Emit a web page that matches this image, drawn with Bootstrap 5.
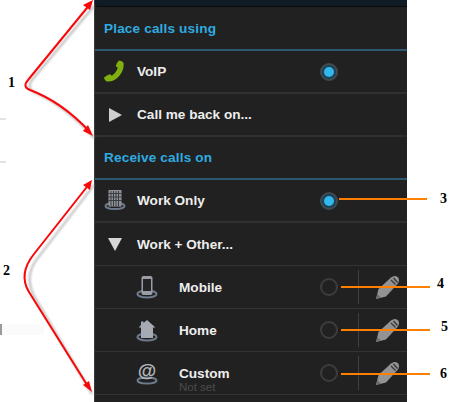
<!DOCTYPE html>
<html lang="en">
  <head>
    <meta charset="UTF-8" />
    <title>Call settings</title>
    <link href="https://cdn.jsdelivr.net/npm/bootstrap@5.3.2/dist/css/bootstrap.min.css" rel="stylesheet" />
    <style>
      body {
        background-color: #ffffff;
        width: 453px;
        height: 402px;
        overflow: hidden;
        position: relative;
        font-family: "Liberation Sans", Arial, sans-serif;
      }

      .phone-panel {
        margin-left: 94px;
        width: 313px;
        height: 402px;
        background-color: #212121;
        border-left: 1px solid #3c3c3c;
        overflow: hidden;
      }

      .title-bar {
        height: 6px;
        background-color: #111b23;
        border-bottom: 1px solid #0c0c0c;
        box-sizing: content-box;
      }

      .section-head {
        height: 43px;
        padding-left: 9px;
        padding-top: 2px;
        color: #2fabe0;
        font-size: 13.6px;
        font-weight: 700;
        letter-spacing: 0.15px;
        border-bottom: 2px solid #2b5a6e;
      }

      .section-head.first-head {
        height: 44px;
      }

      .opt-row {
        height: 43px;
        border-bottom: 1px solid #343434;
        color: #eeeeee;
        font-size: 13.6px;
        font-weight: 700;
      }

      .opt-row.thick-line {
        border-bottom: 2px solid #303030;
      }

      .opt-icon {
        width: 42px;
        flex: none;
        padding-right: 2px;
      }

      .sub-row .opt-icon {
        margin-left: 30px;
        width: 54px;
        padding-right: 10px;
      }

      .opt-label {
        flex: 1 1 auto;
        min-width: 0;
        padding-top: 2px;
      }

      .opt-note {
        display: block;
        color: #4c4c4c;
        font-size: 11.5px;
        font-weight: 400;
        line-height: 10px;
      }

      .custom-label {
        line-height: 16px;
        padding-top: 11px;
      }

      .radio-on,
      .radio-off {
        width: 18px;
        height: 18px;
        border-radius: 50%;
        flex: none;
        margin-right: 69px;
      }

      .radio-on {
        background-color: #1b4257;
        border: 2px solid #3e4a50;
      }

      .radio-on::after {
        content: "";
        display: block;
        width: 10px;
        height: 10px;
        margin: 2px;
        border-radius: 50%;
        background-color: #32b7ee;
      }

      .radio-off {
        border: 2px solid #3d3d3d;
      }

      .sub-row .radio-off {
        margin-right: 20px;
      }

      .edit-cell {
        width: 49px;
        height: 34px;
        flex: none;
        border-left: 1px solid #404040;
        padding-left: 16px;
      }

      .note-layer {
        position: absolute;
        left: 0;
        top: 0;
        pointer-events: none;
      }

      .callout-num {
        position: absolute;
        color: #000000;
        font-family: "Liberation Serif", "Times New Roman", serif;
        font-size: 14px;
        font-weight: 700;
        line-height: 14px;
      }
    </style>
  </head>

  <body class="m-0">
    <div class="phone-panel d-flex flex-column">
      <div class="title-bar"></div>
      <div class="section-head first-head d-flex align-items-center">Place calls using</div>

      <div class="opt-row thick-line d-flex align-items-center">
        <div class="opt-icon d-flex justify-content-center">
          <svg width="24" height="24" viewBox="0 0 24 24">
            <path d="M1 17.500c2-1.500 4-2.800 6-3.200l1.800 1.500c2.500-1.500 5-4.500 6-8l-2-1.500c.4-2 1.500-4 3-5.800 2 .2 4 1 4.800 2.500.5 5-1.500 10-5.300 14-3.500 3.500-7.500 5-11.300 4.500C2.500 21 1.300 19.500 1 17.500z" fill="#80b010" />
          </svg>
        </div>
        <div class="opt-label">VoIP</div>
        <div class="radio-on"></div>
      </div>

      <div class="opt-row thick-line d-flex align-items-center">
        <div class="opt-icon d-flex justify-content-center">
          <svg width="16" height="16" viewBox="0 0 16 16"><path d="M2 1 15 8 2 15z" fill="#cfcfcf" /></svg>
        </div>
        <div class="opt-label">Call me back on...</div>
      </div>

      <div class="section-head d-flex align-items-center">Receive calls on</div>

      <div class="opt-row thick-line d-flex align-items-center">
        <div class="opt-icon d-flex justify-content-center">
          <svg width="24" height="26" viewBox="0 0 24 26">
            <ellipse cx="12" cy="18" rx="9.500" ry="3" fill="none" stroke="#6e7b8c" stroke-width="2" />
            <rect x="5.500" y="2" width="13" height="16.500" fill="#8f9299" />
            <path d="M8 3v15M10.500 3v15M13 3v15M15.500 3v15M5.500 5.500h13M5.500 9h13M5.500 12.500h13" stroke="#3a3c40" stroke-width="1" />
          </svg>
        </div>
        <div class="opt-label">Work Only</div>
        <div class="radio-on"></div>
      </div>

      <div class="opt-row d-flex align-items-center">
        <div class="opt-icon d-flex justify-content-center">
          <svg width="16" height="16" viewBox="0 0 16 16"><path d="M1 2h14L8 15z" fill="#d6d6d6" /></svg>
        </div>
        <div class="opt-label">Work + Other...</div>
      </div>

      <div class="opt-row sub-row d-flex align-items-center">
        <div class="opt-icon d-flex justify-content-center">
          <svg width="22" height="24" viewBox="0 0 22 24">
            <ellipse cx="11" cy="19" rx="9.500" ry="3.500" fill="none" stroke="#6e7b8c" stroke-width="2" />
            <rect x="5.500" y="1" width="11" height="19" rx="2" fill="#9a9da3" />
            <rect x="7" y="4" width="8" height="12" fill="#222426" />
          </svg>
        </div>
        <div class="opt-label">Mobile</div>
        <div class="radio-off"></div>
        <div class="edit-cell d-flex align-items-center">
          <svg width="25" height="25" viewBox="0 0 25 25">
            <path d="M1 24 3.500 14 16 2.500c2.500-2 5-2 6.800-.2s1.700 4.300-.3 6.700L11 21.500z" fill="#939393" />
            <path d="M16 5 20.500 9.500M18.500 3 22.500 7.500" stroke="#3a3a3a" stroke-width="1.400" />
            <path d="M1 24 2.300 19 6 22.800z" fill="#6c6c6c" />
          </svg>
        </div>
      </div>

      <div class="opt-row sub-row d-flex align-items-center">
        <div class="opt-icon d-flex justify-content-center">
          <svg width="22" height="24" viewBox="0 0 22 24">
            <ellipse cx="11" cy="19" rx="9.500" ry="3.500" fill="none" stroke="#6e7b8c" stroke-width="2" />
            <path d="M11 2 19.500 9.500H17V20H5V9.500H2.500L5 7V3.500H7.500V5z" fill="#a6aab2" />
          </svg>
        </div>
        <div class="opt-label">Home</div>
        <div class="radio-off"></div>
        <div class="edit-cell d-flex align-items-center">
          <svg width="25" height="25" viewBox="0 0 25 25">
            <path d="M1 24 3.500 14 16 2.500c2.500-2 5-2 6.800-.2s1.700 4.300-.3 6.700L11 21.500z" fill="#939393" />
            <path d="M16 5 20.500 9.500M18.500 3 22.500 7.500" stroke="#3a3a3a" stroke-width="1.400" />
            <path d="M1 24 2.300 19 6 22.800z" fill="#6c6c6c" />
          </svg>
        </div>
      </div>

      <div class="opt-row sub-row d-flex align-items-center">
        <div class="opt-icon d-flex justify-content-center">
          <svg width="22" height="24" viewBox="0 0 22 24">
            <ellipse cx="11" cy="19.500" rx="9.500" ry="3" fill="none" stroke="#6e7b8c" stroke-width="2" />
            <text x="11" y="15.500" text-anchor="middle" font-family="Liberation Sans, sans-serif" font-size="19" font-weight="700" fill="#b4b7bd">@</text>
          </svg>
        </div>
        <div class="opt-label custom-label">Custom<span class="opt-note">Not set</span></div>
        <div class="radio-off"></div>
        <div class="edit-cell d-flex align-items-center">
          <svg width="25" height="25" viewBox="0 0 25 25">
            <path d="M1 24 3.500 14 16 2.500c2.500-2 5-2 6.800-.2s1.700 4.300-.3 6.700L11 21.500z" fill="#939393" />
            <path d="M16 5 20.500 9.500M18.500 3 22.500 7.500" stroke="#3a3a3a" stroke-width="1.400" />
            <path d="M1 24 2.300 19 6 22.800z" fill="#6c6c6c" />
          </svg>
        </div>
      </div>
    </div>

    <!-- callouts drawn over the screenshot -->
    <svg class="note-layer" width="453" height="402" viewBox="0 0 453 402">
      <defs>
        <filter id="softShadow" x="-20%" y="-20%" width="140%" height="140%"><feGaussianBlur stdDeviation="1.200" /></filter>
      </defs>
      <g fill="none" stroke="#9a9a9a" stroke-width="2" filter="url(#softShadow)" opacity="0.7">
        <path d="M94 6 31 81Q27 88 34 92 66 106 94 138" />
        <path d="M94 185 37 259Q24 276 34 296L92 394" />
      </g>
      <g fill="none" stroke="#f80808" stroke-width="2">
        <path d="M91 3 28 80Q22 87 30 90 62 102 90 132" />
        <path d="M90 183 34 254Q18 274 29 292L89 388" />
      </g>
      <g fill="#f80808">
        <path d="M93 0 90 10 83 5z" />
        <path d="M93 136 83 131 88 125z" />
        <path d="M92 180 90 190 83 185z" />
        <path d="M92 392 83 385 89 381z" />
      </g>
      <g stroke="#ff8000" stroke-width="2">
        <path d="M339 199H427" />
        <path d="M341 287H430" />
        <path d="M341 330H430" />
        <path d="M341 374H430" />
      </g>
      <path d="M0 119H6M0 162H6" stroke="#c8c8c8" stroke-width="1" />
      <rect x="0" y="324" width="2" height="11" fill="#9a9a9a" />
      <rect x="2" y="324" width="42" height="11" fill="#fafafa" />
    </svg>

    <span class="callout-num" style="left: 8px; top: 76px">1</span>
    <span class="callout-num" style="left: 3px; top: 264px">2</span>
    <span class="callout-num" style="left: 440px; top: 192px">3</span>
    <span class="callout-num" style="left: 437px; top: 277px">4</span>
    <span class="callout-num" style="left: 441px; top: 320px">5</span>
    <span class="callout-num" style="left: 440px; top: 367px">6</span>

    <script src="https://cdn.jsdelivr.net/npm/bootstrap@5.3.2/dist/js/bootstrap.bundle.min.js"></script>
  </body>
</html>
